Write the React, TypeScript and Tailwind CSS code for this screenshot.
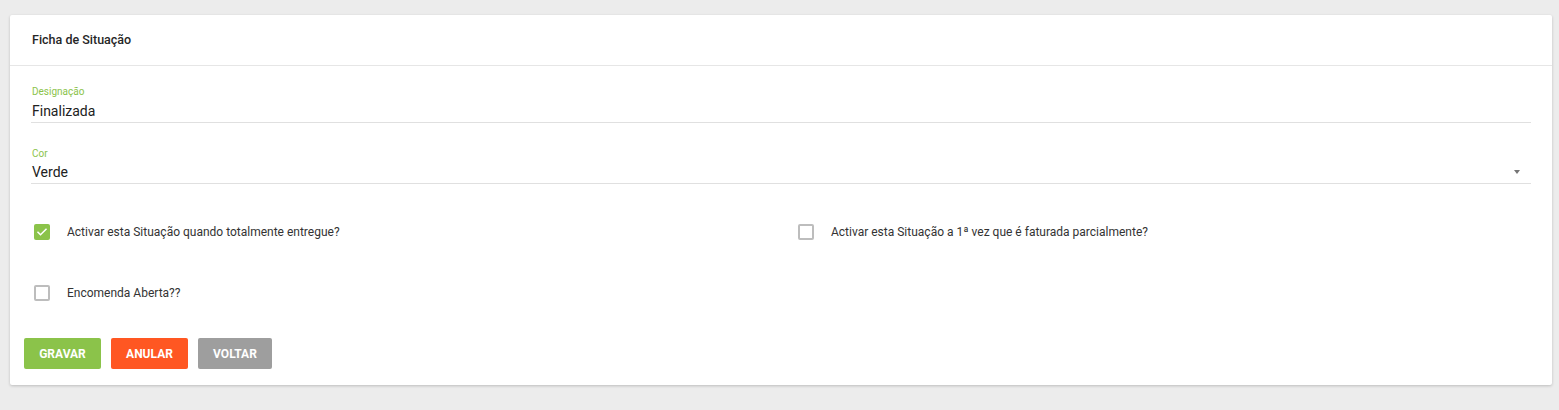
import React from "react";

function Check({ checked }: { checked?: boolean }) {
  return checked ? (
    <span className="flex h-[16px] w-[16px] shrink-0 items-center justify-center rounded-[2px] bg-[#8bc34a]">
      <svg width="12" height="12" viewBox="0 0 24 24" fill="none" stroke="#fff" strokeWidth="3" strokeLinecap="square">
        <path d="M4 12.5l5 5L20 6.5" />
      </svg>
    </span>
  ) : (
    <span className="block h-[16px] w-[16px] shrink-0 rounded-[2px] border-2 border-[#bdbdbd] bg-white" />
  );
}

export default function App() {
  return (
    <div className="min-h-[410px] bg-[#ececec] px-[10px] pt-[15px] pb-[25px]" style={{ fontFamily: "Roboto, 'Liberation Sans', sans-serif" }}>
      <div className="w-[1542px] rounded-[2px] bg-white shadow-[0_1px_3px_rgba(0,0,0,0.2)]">
        <div className="flex h-[51px] items-center border-b border-[#e6e6e6]">
          <span className="ml-[22px] text-[12.5px] font-medium text-[#262626]">Ficha de Situação</span>
        </div>
        <div className="px-[21px] pt-[20px]">
          <div>
            <div className="pl-px text-[10px] leading-[12px] text-[#8bc34a]">Designação</div>
            <div className="mt-[3px] border-b border-[#e0e0e0] pb-[1px] pl-px text-[14px] leading-[20px] text-[#212121]">Finalizada</div>
          </div>
          <div className="mt-[25px]">
            <div className="pl-px text-[10px] leading-[12px] text-[#8bc34a]">Cor</div>
            <div className="mt-[2px] flex items-center justify-between border-b border-[#e0e0e0] pb-[1px] pl-px text-[14px] leading-[20px] text-[#212121]">
              <span>Verde</span>
              <span className="mr-[11px] h-0 w-0 border-x-[3.5px] border-t-[4px] border-x-transparent border-t-[#757575]" />
            </div>
          </div>
          <div className="mt-[40px] grid grid-cols-2">
            <div className="flex h-[16px] items-center pl-[3px]">
              <Check checked />
              <span className="ml-[17px] text-[12px] text-[#333]">Activar esta Situação quando totalmente entregue?</span>
            </div>
            <div className="flex h-[16px] items-center pl-[17px]">
              <Check />
              <span className="ml-[17px] text-[12px] text-[#333]">Activar esta Situação a 1ª vez que é faturada parcialmente?</span>
            </div>
          </div>
          <div className="mt-[45px] flex h-[16px] items-center pl-[3px]">
            <Check />
            <span className="ml-[17px] text-[12px] text-[#333]">Encomenda Aberta??</span>
          </div>
        </div>
        <div className="flex gap-[10px] px-[14px] pt-[37px] pb-[16px]">
          <button className="h-[31px] w-[77px] rounded-[2px] bg-[#8bc34a] text-[12px] font-bold text-white">GRAVAR</button>
          <button className="h-[31px] w-[77px] rounded-[2px] bg-[#ff5722] text-[12px] font-bold text-white">ANULAR</button>
          <button className="h-[31px] w-[74px] rounded-[2px] bg-[#9e9e9e] text-[12px] font-bold text-white">VOLTAR</button>
        </div>
      </div>
    </div>
  );
}
